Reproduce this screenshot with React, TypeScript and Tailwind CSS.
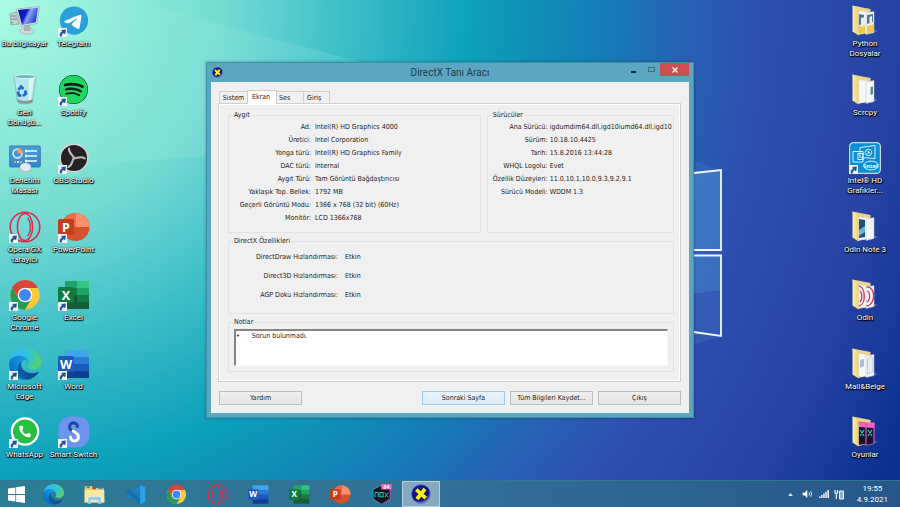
import React from "react";
import { FaSpotify } from "react-icons/fa";

type IconProps = { className?: string };

function EdgeIcon({ className }: IconProps) {
  return (
    <svg viewBox="0 0 256 256" className={className} aria-hidden="true">
      <defs>
        <linearGradient id="edge-a" x1="0.25" x2="1" y1="0.6" y2="0.6">
          <stop offset="0" stopColor="#0c59a4" />
          <stop offset="1" stopColor="#114a8b" />
        </linearGradient>
        <linearGradient id="edge-b" x1="1" x2="0.2" y1="0.3" y2="1">
          <stop offset="0" stopColor="#1b9de2" />
          <stop offset="0.5" stopColor="#0f86d8" />
          <stop offset="1" stopColor="#0067c0" />
        </linearGradient>
        <radialGradient id="edge-c" cx="0.1" cy="0.4" r="1">
          <stop offset="0" stopColor="#35b8f1" />
          <stop offset="0.5" stopColor="#2fc2df" />
          <stop offset="0.95" stopColor="#5ad35c" />
        </radialGradient>
      </defs>
      <g transform="translate(-4.6 -4.9)">
        <path fill="url(#edge-a)" d="M235.68,195.46a93.73,93.73,0,0,1-10.54,4.71,101.87,101.87,0,0,1-35.9,6.46c-47.32,0-88.54-32.55-88.54-74.32A31.48,31.48,0,0,1,117.13,105c-42.8,1.8-53.8,46.4-53.8,72.53,0,73.88,68.09,81.37,82.76,81.37,7.91,0,19.84-2.3,27-4.56l1.31-.44A128.34,128.34,0,0,0,241,201.1a4,4,0,0,0-5.32-5.64Z" />
        <path fill="url(#edge-b)" d="M110.34,246.34A79.2,79.2,0,0,1,87.6,225,80.72,80.72,0,0,1,117.13,105c3.12-1.47,8.45-4.13,15.54-4a32.35,32.35,0,0,1,25.69,13,31.88,31.88,0,0,1,6.36,18.66c0-.21,24.46-79.6-80-79.6-43.9,0-80,41.66-80,78.21a130.15,130.15,0,0,0,12.11,56,128,128,0,0,0,156.38,67.11,75.55,75.55,0,0,1-62.78-8Z" />
        <path fill="url(#edge-c)" d="M156.94,153.78c-.81,1.05-3.3,2.5-3.3,5.66,0,2.61,1.7,5.12,4.72,7.23,14.38,10,41.49,8.68,41.56,8.68a59.56,59.56,0,0,0,30.27-8.35A61.38,61.38,0,0,0,260.63,114c.26-22.41-8-37.31-11.34-43.91C228.09,28.76,182.35,5,132.67,5A128,128,0,0,0,4.63,131.2c.48-36.54,36.8-66.05,80-66.05,3.5,0,23.46.34,42,10.07,16.34,8.58,24.9,18.94,30.85,29.21,6.18,10.67,7.28,24.15,7.28,29.52S162,146.84,156.94,153.78Z" />
      </g>
    </svg>
  );
}

function ChromeIcon({ className }: IconProps) {
  return (
    <svg viewBox="0 0 48 48" className={className} aria-hidden="true">
      <circle cx="24" cy="24" r="22" fill="#fbc83a" />
      <path fill="#d8453a" d="M24 24 L4.95 13 A22 22 0 0 1 43.05 13 L24 13.5Z" />
      <path fill="#d8453a" d="M24 13 H43.3 A22 22 0 0 0 4.95 13 L14.5 29.5 L20 24Z" />
      <path fill="#269a52" d="M4.95 13 A22 22 0 0 0 24 46 L33.5 29.5 L24 30 L14.5 29.5Z" />
      <circle cx="24" cy="24" r="11" fill="#fff" />
      <circle cx="24" cy="24" r="9" fill="#4285f4" />
    </svg>
  );
}

function OperaIcon({ className }: IconProps) {
  return (
    <svg viewBox="0 0 32 32" className={className} fill="none" stroke="#e0284f" aria-hidden="true">
      <circle cx="16" cy="16" r="14.8" strokeWidth="1.6" />
      <ellipse cx="16" cy="16" rx="7.6" ry="13.6" strokeWidth="1.5" />
      <path d="M18.5 7 C22 10 22.5 21 18.5 25" strokeWidth="1.4" />
    </svg>
  );
}

function OfficeBadge({ letter, color }: { letter: string; color: string }) {
  return (
    <>
      <rect x="0" y="8" width="16" height="16" rx="1.5" fill={color} />
      <text x="8" y="20.5" textAnchor="middle" fontSize="12.5" fontWeight="700" fill="#fff" fontFamily="'Open Sans', sans-serif">
        {letter}
      </text>
    </>
  );
}

function PowerPointIcon({ className }: IconProps) {
  return (
    <svg viewBox="0 0 32 32" className={className} aria-hidden="true">
      <circle cx="17.5" cy="16" r="14" fill="#d35230" />
      <path d="M17.5 16 V2 A14 14 0 0 1 31.5 16Z" fill="#ff8f6b" />
      <path d="M17.5 16 V2 A14 14 0 0 0 3.5 16Z" fill="#ed6c47" />
      <OfficeBadge letter="P" color="#c43e1c" />
    </svg>
  );
}

function ExcelIcon({ className }: IconProps) {
  return (
    <svg viewBox="0 0 32 32" className={className} aria-hidden="true">
      <rect x="7" y="2" width="12" height="7.5" fill="#21a366" />
      <rect x="19" y="2" width="12" height="7.5" fill="#33c481" />
      <rect x="7" y="9" width="12" height="7.5" fill="#107c41" />
      <rect x="19" y="9" width="12" height="7.5" fill="#21a366" />
      <rect x="7" y="16" width="12" height="14" fill="#185c37" />
      <rect x="19" y="16" width="12" height="7" fill="#107c41" />
      <rect x="19" y="23" width="12" height="7" fill="#185c37" />
      <OfficeBadge letter="X" color="#107c41" />
    </svg>
  );
}

function WordIcon({ className }: IconProps) {
  return (
    <svg viewBox="0 0 32 32" className={className} aria-hidden="true">
      <rect x="7" y="2" width="24" height="7.5" fill="#41a5ee" />
      <rect x="7" y="9" width="24" height="7.5" fill="#2b7cd3" />
      <rect x="7" y="16" width="24" height="7.5" fill="#185abd" />
      <rect x="7" y="23" width="24" height="7" fill="#103f91" />
      <OfficeBadge letter="W" color="#1f5bbd" />
    </svg>
  );
}

function ComputerIcon({ className }: IconProps) {
  return (
    <svg viewBox="0 0 32 32" className={className} aria-hidden="true">
      <defs>
        <linearGradient id="pc-screen" x1="0" x2="1" y1="0" y2="0.4">
          <stop offset="0" stopColor="#060c90" />
          <stop offset="0.45" stopColor="#1020d0" />
          <stop offset="0.6" stopColor="#8fa4f5" />
          <stop offset="1" stopColor="#1f3fd8" />
        </linearGradient>
      </defs>
      <path d="M1 9 L7 7 L10 19 L2 20Z" fill="#c9d0d4" stroke="#7d878c" strokeWidth="0.6" />
      <path d="M2 11 H7 M2 14 H8" stroke="#5b666b" strokeWidth="0.7" />
      <path d="M2 17.5 h2" stroke="#35d03c" strokeWidth="1.4" />
      <ellipse cx="18" cy="26" rx="7" ry="3.2" fill="#d5d9db" stroke="#8c9598" strokeWidth="0.5" />
      <path d="M15 19 H21 L21.500 26 H15Z" fill="#aab2b5" />
      <path d="M7.500 4 L30.500 1.500 L28 18.500 L12 21.500Z" fill="#d9e2ea" stroke="#8593a0" strokeWidth="0.5" />
      <path d="M9 5 L29 2.800 L26.800 17.300 L13 20Z" fill="url(#pc-screen)" />
    </svg>
  );
}

function RecycleIcon({ className }: IconProps) {
  return (
    <svg viewBox="0 0 32 32" className={className} aria-hidden="true">
      <path d="M5 2 L27 2 L23.5 28 Q16 32 8.5 28Z" fill="#b9e4ee" fillOpacity="0.85" stroke="#84a9b5" strokeWidth="0.7" />
      <ellipse cx="16" cy="2.6" rx="11" ry="2" fill="#6fb5c6" stroke="#dff5fa" strokeWidth="1" />
      <path d="M20 5 L25 4 L22 27 L19 28Z" fill="#fff" fillOpacity="0.5" />
      <path d="M8.3 25 Q16 29 23.7 25 L23.3 28.5 Q16 31 8.7 28.5Z" fill="#8b989d" />
      <g fill="none" stroke="#1d68c4" strokeWidth="2.6">
        <path d="M9.500 16 L12 12.500 L14.500 15" />
        <path d="M8.800 17.500 L10 21.500 H12.500" />
        <path d="M16 16.500 L17 19.500 L14 22" />
      </g>
    </svg>
  );
}

function ControlPanelIcon({ className }: IconProps) {
  return (
    <svg viewBox="0 0 32 32" className={className} aria-hidden="true">
      <defs>
        <linearGradient id="cp-bg" x1="0" x2="0" y1="0" y2="1">
          <stop offset="0" stopColor="#4f9edb" />
          <stop offset="1" stopColor="#3488cd" />
        </linearGradient>
      </defs>
      <rect x="0.7" y="4" width="30.6" height="21" rx="1" fill="url(#cp-bg)" stroke="#2c6fa8" strokeWidth="0.8" />
      <circle cx="8.5" cy="11.5" r="4.4" fill="none" stroke="#d6ecff" strokeWidth="1.6" />
      <path d="M8.5 11.5 V6 A5.4 5.4 0 0 1 13.9 11.5Z" fill="#f0a64c" />
      <path d="M16 9 H28 M16 14 H28 M16 19 H28" stroke="#bfe1fb" strokeWidth="1.8" />
      <path d="M16 9 H18 M16 14 H18 M16 19 H18" stroke="#fff" strokeWidth="2.6" />
      <path d="M5 20 H7 M11 20 H13" stroke="#f4bb5b" strokeWidth="1.6" />
      <path d="M8 20 H10" stroke="#fff" strokeWidth="1.6" />
      <ellipse cx="16.5" cy="27.500" rx="7" ry="3" fill="#b4bfc5" />
      <ellipse cx="16.5" cy="25" rx="5.500" ry="4" fill="#e3e9ec" />
    </svg>
  );
}

function TelegramIcon({ className }: IconProps) {
  return (
    <svg viewBox="0 0 240 240" className={className} aria-hidden="true">
      <circle cx="120" cy="117" r="106" fill="#2a9fd9" />
      <path fill="#fff" d="M54.3 118.8c35-15.2 58.3-25.3 70-30.2 33.3-13.9 40.3-16.3 44.8-16.4 1 0 3.2.2 4.7 1.4 1.2 1 1.5 2.3 1.7 3.3s.4 3.1.2 4.7c-1.8 19-9.6 65.1-13.6 86.3-1.7 9-5 12-8.2 12.3-7 .6-12.3-4.6-19-9-10.6-6.9-16.5-11.2-26.8-18-11.9-7.8-4.2-12.1 2.6-19.1 1.8-1.8 32.5-29.8 33.1-32.3.1-.3.1-1.5-.6-2.1-.7-.6-1.7-.4-2.5-.2-1.1.2-17.9 11.4-50.6 33.5-4.8 3.3-9.1 4.9-13 4.8-4.3-.1-12.500-2.400-18.700-4.400-7.500-2.400-13.500-3.700-13-7.900.3-2.200 3.300-4.400 8.900-6.700z" />
    </svg>
  );
}

function SpotifyIcon() {
  return (
    <span className="flex size-8 items-center justify-center">
      <span className="flex size-[29px] items-center justify-center rounded-full bg-[#121a14]">
        <FaSpotify className="size-[29px] text-[#1ed760]" />
      </span>
    </span>
  );
}

function ObsIcon({ className }: IconProps) {
  return (
    <svg viewBox="0 0 32 32" className={className} aria-hidden="true">
      <circle cx="16" cy="16" r="13.800" fill="#262224" stroke="#d8d6d8" strokeWidth="1.400" />
      <g fill="none" stroke="#bdbbbd" strokeWidth="2" strokeLinecap="round">
        <path d="M16 16.500 C16.500 13.500 10.500 12.500 11 6.500" />
        <path d="M16 16.500 C16.500 13.500 10.500 12.500 11 6.500" transform="rotate(120 16 16)" />
        <path d="M16 16.500 C16.500 13.500 10.500 12.500 11 6.500" transform="rotate(240 16 16)" />
      </g>
    </svg>
  );
}

function WhatsAppIcon({ className }: IconProps) {
  return (
    <svg viewBox="0 0 32 32" className={className} aria-hidden="true">
      <circle cx="16" cy="15.500" r="14.300" fill="#fff" />
      <path d="M1.500 30.500 L4 19 L12 27.500Z" fill="#fff" />
      <circle cx="16" cy="15.500" r="12" fill="#25c03f" />
      <path
        transform="translate(9 8.500) scale(0.580)"
        fill="#fff"
        d="M13.832 16.568a1 1 0 0 0 1.213-.303l.355-.465A2 2 0 0 1 17 15h3a2 2 0 0 1 2 2v3a2 2 0 0 1-2 2A18 18 0 0 1 2 4a2 2 0 0 1 2-2h3a2 2 0 0 1 2 2v3a2 2 0 0 1-.8 1.600l-.468.351a1 1 0 0 0-.292 1.233 14 14 0 0 0 6.392 6.384"
      />
    </svg>
  );
}

function SmartSwitchIcon({ className }: IconProps) {
  return (
    <svg viewBox="0 0 32 32" className={className} aria-hidden="true">
      <rect x="0.5" y="0.5" width="31" height="31" rx="12" fill="#6d95ee" />
      <g fill="none" strokeWidth="3" strokeLinecap="round">
        <path d="M19.5 10.5 A4 4 0 1 0 13 14 L17 17" stroke="#17479e" />
        <path d="M15 15 L18.5 17.5 A4 4 0 1 1 12.5 21" stroke="#fff" />
      </g>
    </svg>
  );
}

function IntelIcon({ className }: IconProps) {
  return (
    <svg viewBox="0 0 32 32" className={className} aria-hidden="true">
      <rect x="0.6" y="0.6" width="30.8" height="30.8" rx="4" fill="#0a8fd4" stroke="#c3dbea" strokeWidth="1.2" />
      <g fill="none" stroke="#d8f1ff" strokeWidth="1">
        <path d="M11 5.5 L26 3.5 V16.5 L11 15.5Z" />
        <path d="M4 9.5 H14 V20 H4Z" />
        <rect x="9" y="11.5" width="5" height="6" />
        <circle cx="19.5" cy="10.5" r="3.2" />
        <ellipse cx="22" cy="23.5" rx="7.4" ry="4.4" />
      </g>
      <path d="M18.6 8.8 L21.5 10.5 L18.6 12.2Z" fill="#fff" />
      <text x="22" y="25.6" textAnchor="middle" fontSize="6" fontWeight="700" fill="#fff" fontFamily="'Open Sans', sans-serif">
        intel
      </text>
    </svg>
  );
}

type FolderKind = "python" | "doc" | "photo" | "opera" | "mail" | "nox";

function FolderIcon({ kind }: { kind: FolderKind }) {
  const page = kind === "nox" ? "#1b1230" : "#f6f7f8";
  return (
    <svg viewBox="0 0 32 32" className="size-8" aria-hidden="true">
      <defs>
        <linearGradient id="folder-front" x1="0" x2="1" y1="0" y2="0">
          <stop offset="0" stopColor="#fbeeb0" />
          <stop offset="1" stopColor="#eccf78" />
        </linearGradient>
      </defs>
      <path d="M22 29 L29 26 L24 24Z" fill="#9fb4dd" opacity="0.35" />
      <path d="M3.500 0.500 L21.500 4 V27 L9 30Z" fill="#ecd488" />
      <path d="M9.500 5.500 L20 7 V28 L9.500 29Z" fill={page} stroke="#c8cbd0" strokeWidth="0.4" />
      <path d="M17 8 L25 6.500 V27.500 L17 29.500Z" fill={page} stroke="#b5bac2" strokeWidth="0.5" />
      {kind === "python" && (
        <>
          <path d="M10 9 L15 10 V19 L10 20Z M18 10 L24 9 V17 L18 19Z" fill="#4f7894" />
          <path d="M10 21 L16 19 V28 L10 29Z M18 21 L25 19 V27 L18 29Z" fill="#f1c84a" />
          <path d="M12 13 L16 12 V21 L12 22Z M20.500 12 L23 11 V20 L20.500 21Z" fill="#e9edf0" />
        </>
      )}
      {kind === "doc" && <path d="M21.5 13 L24 12.5 V20 L21.5 21Z" fill="#5a8d80" />}
      {kind === "photo" && (
        <>
          <path d="M10 8 L16 9 V26 L10 27Z" fill="#1b4f7d" />
          <path d="M10 19 L16 15 V21 L10 25Z" fill="#62b8d9" />
          <path d="M19 11 h5 M19 14 h5 M19 17 h5" stroke="#d5d8dd" strokeWidth="0.7" />
        </>
      )}
      {kind === "opera" && (
        <g fill="none" stroke="#d0324f" strokeWidth="1.3">
          <path d="M10 7 C17 8 17 26 10 27 M11 12 C13.5 14 13.5 20 11 23" />
          <path d="M17.5 8 C27 7 27 26 17.5 27 M18 12 C21.5 13 21.5 21 18 23" />
        </g>
      )}
      {kind === "mail" && (
        <>
          <path d="M11 12 L15 11 V18 L11 20Z" fill="#a9bfd3" />
          <path d="M18.5 11 L21 8.500 L24 10 V24 L18.5 26Z" fill="#e7ecf1" stroke="#9fa8b2" strokeWidth="0.5" />
        </>
      )}
      {kind === "nox" && (
        <>
          <path d="M10 6 L25.5 7 V12 L10 11Z" fill="#ff5fc4" />
          <path d="M17 7 V29 M25 8 V27" stroke="#e23fb0" strokeWidth="1" />
          <path d="M11 14 L15 20 M15 14 L11 20 M19 14 L23 20 M23 14 L19 20" stroke="#19d3c5" strokeWidth="1.2" />
        </>
      )}
      <path d="M3.500 0.500 L9.500 4 V30.500 L3.500 26.500Z" fill="url(#folder-front)" />
    </svg>
  );
}

function ExplorerIcon({ className }: IconProps) {
  return (
    <svg viewBox="0 0 32 32" className={className} aria-hidden="true">
      <path d="M1 5 L2 3 H12 L13.5 6 H30 L31 28 H1Z" fill="#e3c76f" />
      <path d="M4 3.5 H9 V6 H4Z" fill="#2f9e4e" />
      <path d="M13 5 H18 V8 H13Z" fill="#d8392f" />
      <path d="M22 5.5 H28 V8 H22Z" fill="#3b8fe0" />
      <path d="M1 9 H31 V28 H1Z" fill="#fae9a5" />
      <path d="M6 29.5 V23 Q6 19.5 9.5 19.5 H22.5 Q26 19.5 26 23 V29.5 H21.5 V24.5 H10.5 V29.5Z" fill="#8fc8ea" stroke="#d5effb" strokeWidth="0.8" />
    </svg>
  );
}

function VsCodeIcon({ className }: IconProps) {
  return (
    <svg viewBox="0 0 32 32" className={className} aria-hidden="true">
      <path d="M23 1 V10 L4 24 L1 21.5Z" fill="#1b7fc9" />
      <path d="M23 31 V22 L4 8 L1 10.5Z" fill="#0f6fbb" />
      <path d="M23 1 L31 4.5 V27.5 L23 31Z" fill="#2aa1ea" />
    </svg>
  );
}

function NoxIcon({ className }: IconProps) {
  return (
    <svg viewBox="0 0 32 32" className={className} aria-hidden="true">
      <defs>
        <linearGradient id="nox-edge" x1="0" x2="1" y1="0" y2="0">
          <stop offset="0" stopColor="#18c9c0" />
          <stop offset="1" stopColor="#e43fb5" />
        </linearGradient>
      </defs>
      <path d="M16 2 L29 8 V23 L16 31 L3 23 V8Z" fill="#15141c" stroke="url(#nox-edge)" strokeWidth="1.3" />
      <g fill="none" stroke="#1fc9c4" strokeWidth="1.5">
        <path d="M6 20 V13 H11 V20" />
        <rect x="13.5" y="13" width="5" height="6.5" />
        <path d="M21 13 L26 20 M26 13 L21 20" />
      </g>
      <rect x="15.5" y="0" width="16" height="8.5" rx="1.5" fill="#f45bbd" />
      <text x="23.5" y="7" textAnchor="middle" fontSize="8" fontWeight="700" fill="#fff" fontFamily="'Open Sans', sans-serif">
        64
      </text>
    </svg>
  );
}

function DirectXIcon({ className }: IconProps) {
  return (
    <svg viewBox="0 0 32 32" className={className} aria-hidden="true">
      <defs>
        <radialGradient id="dx-ball" cx="0.4" cy="0.35" r="0.7">
          <stop offset="0" stopColor="#1c22b0" />
          <stop offset="0.7" stopColor="#070b86" />
          <stop offset="1" stopColor="#8fa0dc" />
        </radialGradient>
      </defs>
      <circle cx="16" cy="16" r="15" fill="url(#dx-ball)" stroke="#5566b8" strokeWidth="1" />
      <path d="M8.5 9 L23.5 22.5 M22.5 8 L9.5 24" stroke="#1a1a20" strokeWidth="8" />
      <path d="M8.5 9 L23.5 22.5 M22.5 8 L9.5 24" stroke="#fbee1d" strokeWidth="6" />
    </svg>
  );
}

function WindowsIcon({ className }: IconProps) {
  return (
    <svg viewBox="0 0 18 18" className={className} fill="#fff" aria-hidden="true">
      <path d="M0 2.6 L7.8 1.5 V8.6 H0Z M8.6 1.4 L18 0 V8.6 H8.6Z M0 9.4 H7.8 V16.5 L0 15.4Z M8.6 9.4 H18 V18 L8.6 16.6Z" />
    </svg>
  );
}

function ShortcutArrow() {
  return (
    <svg viewBox="0 0 9 9" className="absolute bottom-0 left-0 size-[9px]" aria-hidden="true">
      <rect width="9" height="9" fill="#eef4f9" />
      <path d="M2 8.2 C1.6 5.5 2.6 4.2 4.3 3.7 L3.5 2.2 L7.7 1.7 L7 6 L5.7 4.9 C4.2 5.6 3.5 6.4 3.7 8.2Z" fill="#1f5197" stroke="#1f5197" strokeWidth="0.400" />
    </svg>
  );
}

type Shortcut = { label: string; icon: React.ReactNode; linked?: boolean };

const leftShortcuts: Shortcut[] = [
  { label: "Bu bilgisayar", icon: <ComputerIcon className="size-8" /> },
  { label: "Telegram", icon: <TelegramIcon className="size-8" />, linked: true },
  { label: "Geri\nDönüşü...", icon: <RecycleIcon className="size-8" /> },
  { label: "Spotify", icon: <SpotifyIcon />, linked: true },
  { label: "Denetim\nMasası", icon: <ControlPanelIcon className="size-8" /> },
  { label: "OBS Studio", icon: <ObsIcon className="size-8" />, linked: true },
  { label: "Opera GX\ntarayıcı", icon: <OperaIcon className="size-8" />, linked: true },
  { label: "PowerPoint", icon: <PowerPointIcon className="size-8" />, linked: true },
  { label: "Google\nChrome", icon: <ChromeIcon className="size-8" />, linked: true },
  { label: "Excel", icon: <ExcelIcon className="size-8" />, linked: true },
  { label: "Microsoft\nEdge", icon: <EdgeIcon className="size-8" />, linked: true },
  { label: "Word", icon: <WordIcon className="size-8" />, linked: true },
  { label: "WhatsApp", icon: <WhatsAppIcon className="size-8" />, linked: true },
  { label: "Smart Switch", icon: <SmartSwitchIcon className="size-8" />, linked: true },
];

const rightShortcuts: Shortcut[] = [
  { label: "Python\nDosyalar", icon: <FolderIcon kind="python" /> },
  { label: "Scrcpy", icon: <FolderIcon kind="doc" /> },
  { label: "Intel® HD\nGrafikler...", icon: <IntelIcon className="size-8" />, linked: true },
  { label: "Odin Note 3", icon: <FolderIcon kind="photo" /> },
  { label: "Odin", icon: <FolderIcon kind="opera" /> },
  { label: "Mail&Belge", icon: <FolderIcon kind="mail" /> },
  { label: "Oyunlar", icon: <FolderIcon kind="nox" /> },
];

function DesktopShortcut({ label, icon, linked }: Shortcut) {
  return (
    <button type="button" className="flex flex-col items-center gap-0.5 pt-[5px]">
      <span className="relative size-8">
        {icon}
        {linked && <ShortcutArrow />}
      </span>
      <span className="text-center font-['Roboto','Open_Sans',sans-serif] text-[8px] leading-[10px] whitespace-pre text-white [text-shadow:0_1px_1px_#000,0_0_2px_#000,1px_1px_1px_#000]">
        {label}
      </span>
    </button>
  );
}

function Wallpaper() {
  return (
    <svg viewBox="0 0 900 507" preserveAspectRatio="none" className="absolute inset-0 size-full" aria-hidden="true">
      <defs>
        <linearGradient id="beam" x1="0" x2="1" y1="0" y2="0.3">
          <stop offset="0" stopColor="#c8fff0" stopOpacity="0.02" />
          <stop offset="1" stopColor="#c8fff0" stopOpacity="0.16" />
        </linearGradient>
      </defs>
      <path d="M130 0 L360 62 L500 150 L300 150 L0 170 V0Z" fill="url(#beam)" />
      <path d="M690 160 L722 170 V336 L690 346Z" fill="#5aa6dc" fillOpacity="0.14" />
      <path d="M690 172 L721 169 V250 H690Z" fill="#59a8dd" fillOpacity="0.3" />
      <path d="M690 255 H721 V290 L690 294Z" fill="#59a8dd" fillOpacity="0.25" />
      <path d="M690 173.5 L721 170 V250 H690 M690 255.5 H721 V336 L690 331.5" fill="none" stroke="#f0f8ff" strokeWidth="1.8" />
    </svg>
  );
}

type Row = [string, string];

const deviceRows: Row[] = [
  ["Ad:", "Intel(R) HD Graphics 4000"],
  ["Üretici:", "Intel Corporation"],
  ["Yonga türü:", "Intel(R) HD Graphics Family"],
  ["DAC türü:", "Internal"],
  ["Aygıt Türü:", "Tam Görüntü Bağdaştırıcısı"],
  ["Yaklaşık Top. Bellek:", "1792 MB"],
  ["Geçerli Görüntü Modu:", "1366 x 768 (32 bit) (60Hz)"],
  ["Monitör:", "LCD 1366x768"],
];

const driverRows: Row[] = [
  ["Ana Sürücü:", "igdumdim64.dll,igd10iumd64.dll,igd10"],
  ["Sürüm:", "10.18.10.4425"],
  ["Tarih:", "15.8.2016 13:44:28"],
  ["WHQL Logolu:", "Evet"],
  ["Özellik Düzeyleri:", "11.0,10.1,10.0,9.3,9.2,9.1"],
  ["Sürücü Modeli:", "WDDM 1.3"],
];

const featureRows: Row[] = [
  ["DirectDraw Hızlandırması:", "Etkin"],
  ["Direct3D Hızlandırması:", "Etkin"],
  ["AGP Doku Hızlandırması:", "Etkin"],
];

function Rows({ rows, className }: { rows: Row[]; className: string }) {
  return (
    <dl className={`grid leading-[13px] whitespace-nowrap ${className}`}>
      {rows.map(([name, value]) => (
        <React.Fragment key={name}>
          <dt className="text-right">{name}</dt>
          <dd>{value}</dd>
        </React.Fragment>
      ))}
    </dl>
  );
}

function Group({ title, className, children }: { title: string; className: string; children: React.ReactNode }) {
  return (
    <fieldset className={`min-w-0 border border-[#e2e2e2] ${className}`}>
      <legend className="ml-1 px-px leading-[10px]">{title}</legend>
      {children}
    </fieldset>
  );
}

function DialogButton({ children, primary, className = "" }: { children: React.ReactNode; primary?: boolean; className?: string }) {
  const look = primary
    ? "border-[#9ccbf2] bg-linear-to-b from-[#e9f3fc] to-[#dbebfa]"
    : "border-[#bdbdbd] bg-linear-to-b from-[#efefef] to-[#e4e4e4]";
  return (
    <button type="button" className={`h-3.5 w-[83px] border text-center leading-3 ${look} ${className}`}>
      {children}
    </button>
  );
}

function DirectXDialog() {
  return (
    <section
      aria-labelledby="dialog-title"
      className="flex w-[488px] flex-col border border-[#3f8fa9] bg-[#5ba7c1] px-1 pb-1 shadow-[0_0_3px_rgba(0,0,0,0.3)]"
    >
      <header className="grid h-[19px] grid-cols-[1fr_auto_1fr] items-center">
        <DirectXIcon className="ml-px size-[11px]" />
        <h1 id="dialog-title" className="font-['Roboto','Open_Sans',sans-serif] text-[10px] leading-4 text-[#23404a]">
          DirectX Tanı Aracı
        </h1>
        <div className="flex h-[13px] items-center self-start justify-self-end">
          <button type="button" aria-label="Simge durumuna küçült" className="flex h-full w-[18px] items-center justify-center">
            <span className="mt-1 h-0.5 w-[5px] bg-[#17262c]" />
          </button>
          <button type="button" aria-label="Ekranı kapla" className="flex h-full w-[18px] items-center justify-center">
            <span className="h-[5px] w-[7px] border border-[#3d7485]" />
          </button>
          <button type="button" aria-label="Kapat" className="flex h-full w-[29px] items-center justify-center bg-[#c94f50]">
            <svg viewBox="0 0 6 6" className="size-[6px]" stroke="#fff" strokeWidth="1.3" aria-hidden="true">
              <path d="M0.5 0.5 L5.5 5.5 M5.5 0.5 L0.5 5.5" />
            </svg>
          </button>
        </div>
      </header>

      <div className="bg-[#f0f0f0] pt-2 pr-2 pb-2 pl-[7px] font-['DejaVu_Sans_Condensed','DejaVu_Sans',sans-serif] text-[7px] text-[#1c1c1c]">
        <div role="tablist" className="relative z-10 flex h-3.5 items-end pl-px">
          <button type="button" role="tab" aria-selected="false" className="h-[13px] w-7 border border-r-0 border-[#cfcfcf] leading-3">
            Sistem
          </button>
          <button type="button" role="tab" aria-selected="true" className="h-3.5 w-[30px] border border-b-0 border-[#cfcfcf] bg-white pr-0.5 pb-0.5 leading-3">
            Ekran
          </button>
          <button type="button" role="tab" aria-selected="false" className="h-[13px] w-[27px] border border-l-0 border-[#cfcfcf] pl-0.5 text-left leading-3">
            Ses
          </button>
          <button type="button" role="tab" aria-selected="false" className="h-[13px] w-[26px] border border-l-0 border-[#cfcfcf] pl-[3px] text-left leading-3">
            Giriş
          </button>
        </div>

        <div
          role="tabpanel"
          className="-mt-px flex flex-col gap-[3px] border border-[#cfcfcf] pt-1.5 pr-1.5 pb-[9px] pl-[9px] shadow-[inset_1px_1px_0_#fff,inset_-1px_-1px_0_#fff]"
        >
          <div className="flex gap-1.5">
            <Group title="Aygıt" className="flex-[253] pt-px pb-[7px]">
              <Rows rows={deviceRows} className="grid-cols-[82px_1fr] gap-x-1" />
            </Group>
            <Group title="Sürücüler" className="flex-[187] pt-px pb-[7px]">
              <Rows rows={driverRows} className="grid-cols-[60px_1fr] gap-x-0.5" />
            </Group>
          </div>
          <Group title="DirectX Özellikleri" className="pt-[5px] pb-[11px]">
            <Rows rows={featureRows} className="grid-cols-[109px_1fr] gap-x-[7px] gap-y-1.5" />
          </Group>
          <Group title="Notlar" className="pt-0.5 pb-[5px]">
            <div className="px-[5px]">
              <textarea
                readOnly
                aria-label="Notlar"
                defaultValue={"•      Sorun bulunmadı."}
                className="block h-[37px] w-full resize-none overflow-hidden border-t-2 border-r border-b border-l-2 border-t-[#858585] border-r-[#f8f8f8] border-b-[#f8f8f8] border-l-[#858585] bg-white leading-[10px] outline-none"
              />
            </div>
          </Group>
        </div>

        <div className="mt-[9px] flex gap-[5px] pl-px">
          <DialogButton className="mr-auto">Yardım</DialogButton>
          <DialogButton primary>Sonraki Sayfa</DialogButton>
          <DialogButton>Tüm Bilgileri Kaydet...</DialogButton>
          <DialogButton>Çıkış</DialogButton>
        </div>
      </div>
    </section>
  );
}

const pinned = [
  { name: "Microsoft Edge", icon: <EdgeIcon className="size-[21px]" /> },
  { name: "Dosya Gezgini", icon: <ExplorerIcon className="size-[21px]" /> },
  { name: "Visual Studio Code", icon: <VsCodeIcon className="size-[21px]" /> },
  { name: "Google Chrome", icon: <ChromeIcon className="size-[21px]" /> },
  { name: "Opera GX", icon: <OperaIcon className="size-[21px]" /> },
  { name: "Word", icon: <WordIcon className="size-[21px]" /> },
  { name: "Excel", icon: <ExcelIcon className="size-[21px]" /> },
  { name: "PowerPoint", icon: <PowerPointIcon className="size-[21px]" /> },
  { name: "Nox", icon: <NoxIcon className="size-[21px]" /> },
];

function Taskbar() {
  return (
    <footer className="relative flex h-[27px] items-stretch border-t border-[#2f7690] bg-linear-to-r from-[#2b7d94] via-[#326f98] to-[#27578a]">
      <button type="button" aria-label="Başlat" className="flex w-[33px] items-center justify-center">
        <WindowsIcon className="size-[17px]" />
      </button>
      {pinned.map(({ name, icon }) => (
        <button key={name} type="button" aria-label={name} className="flex w-[41px] items-center justify-center">
          {icon}
        </button>
      ))}
      <button
        type="button"
        aria-label="DirectX Tanı Aracı"
        className="flex w-[38px] items-center justify-center border border-[#b9cfdf] bg-[#84a9c1]"
      >
        <DirectXIcon className="size-5" />
      </button>
      <div className="ml-auto flex items-center gap-[5px] pr-3 text-white">
        <svg viewBox="0 0 6 4" className="mr-1 h-[3px] w-[5px]" fill="#fff" aria-hidden="true">
          <path d="M3 0 L6 4 H0Z" />
        </svg>
        <svg viewBox="0 0 12 10" className="h-[10px] w-3" fill="none" stroke="#e9eff4" aria-hidden="true">
          <path d="M0.5 3.5 H2.5 L5.5 0.8 V9.2 L2.5 6.5 H0.5Z" fill="#fff" stroke="#4b5560" strokeWidth="0.4" />
          <path d="M7 3.5 Q8 5 7 6.5 M8.7 2.2 Q10.4 5 8.7 7.8" strokeWidth="0.9" />
        </svg>
        <svg viewBox="0 0 10 8" className="h-2 w-2.5" fill="#e9eff4" aria-hidden="true">
          <path d="M0 6.5 h1.5 V8 H0z M2.1 5 h1.5 V8 h-1.5z M4.2 3.4 h1.5 V8 h-1.5z M6.3 1.8 h1.5 V8 h-1.5z M8.4 0 H10 V8 h-1.6z" />
        </svg>
        <svg viewBox="0 0 10 11" className="h-[11px] w-2.5" fill="none" stroke="#f0f4f7" aria-hidden="true">
          <path d="M1 1 V3.5 M3.5 1 V3.5 M0.5 4 H4 M2.3 4 V10" strokeWidth="1.2" />
          <path d="M5.5 2 H9.5 V10 H5.5Z" fill="#9aaebd" strokeWidth="1" />
        </svg>
        <time className="ml-2 text-center font-['Roboto','Open_Sans',sans-serif] text-[8px] leading-[11px]" dateTime="2021-09-04T19:55">
          19:55
          <br />
          4.9.2021
        </time>
      </div>
    </footer>
  );
}

export default function App() {
  return (
    <div className="relative flex min-h-screen flex-col overflow-hidden bg-[radial-gradient(circle_farthest-corner_at_0_0,#a8fde2_0%,#74dad2_22%,#3fc0c8_33%,#0a9fbb_46%,#167bb6_59%,#2760b3_67%,#2e4fb0_74%,#2743a4_86%,#0b3090_97%)] font-['Open_Sans','Noto_Sans',sans-serif]">
      <Wallpaper />
      <main className="relative grid flex-1 grid-cols-[1fr_auto_1fr]">
        <nav aria-label="Kısayollar" className="grid grid-cols-[49px_49px] grid-rows-7 justify-self-start">
          {leftShortcuts.map((item) => (
            <DesktopShortcut key={item.label} {...item} />
          ))}
        </nav>
        <div className="self-center">
          <DirectXDialog />
        </div>
        <nav aria-label="Klasörler" className="mr-2.5 grid grid-cols-[50px] grid-rows-7 justify-self-end">
          {rightShortcuts.map((item) => (
            <DesktopShortcut key={item.label} {...item} />
          ))}
        </nav>
      </main>
      <Taskbar />
    </div>
  );
}
